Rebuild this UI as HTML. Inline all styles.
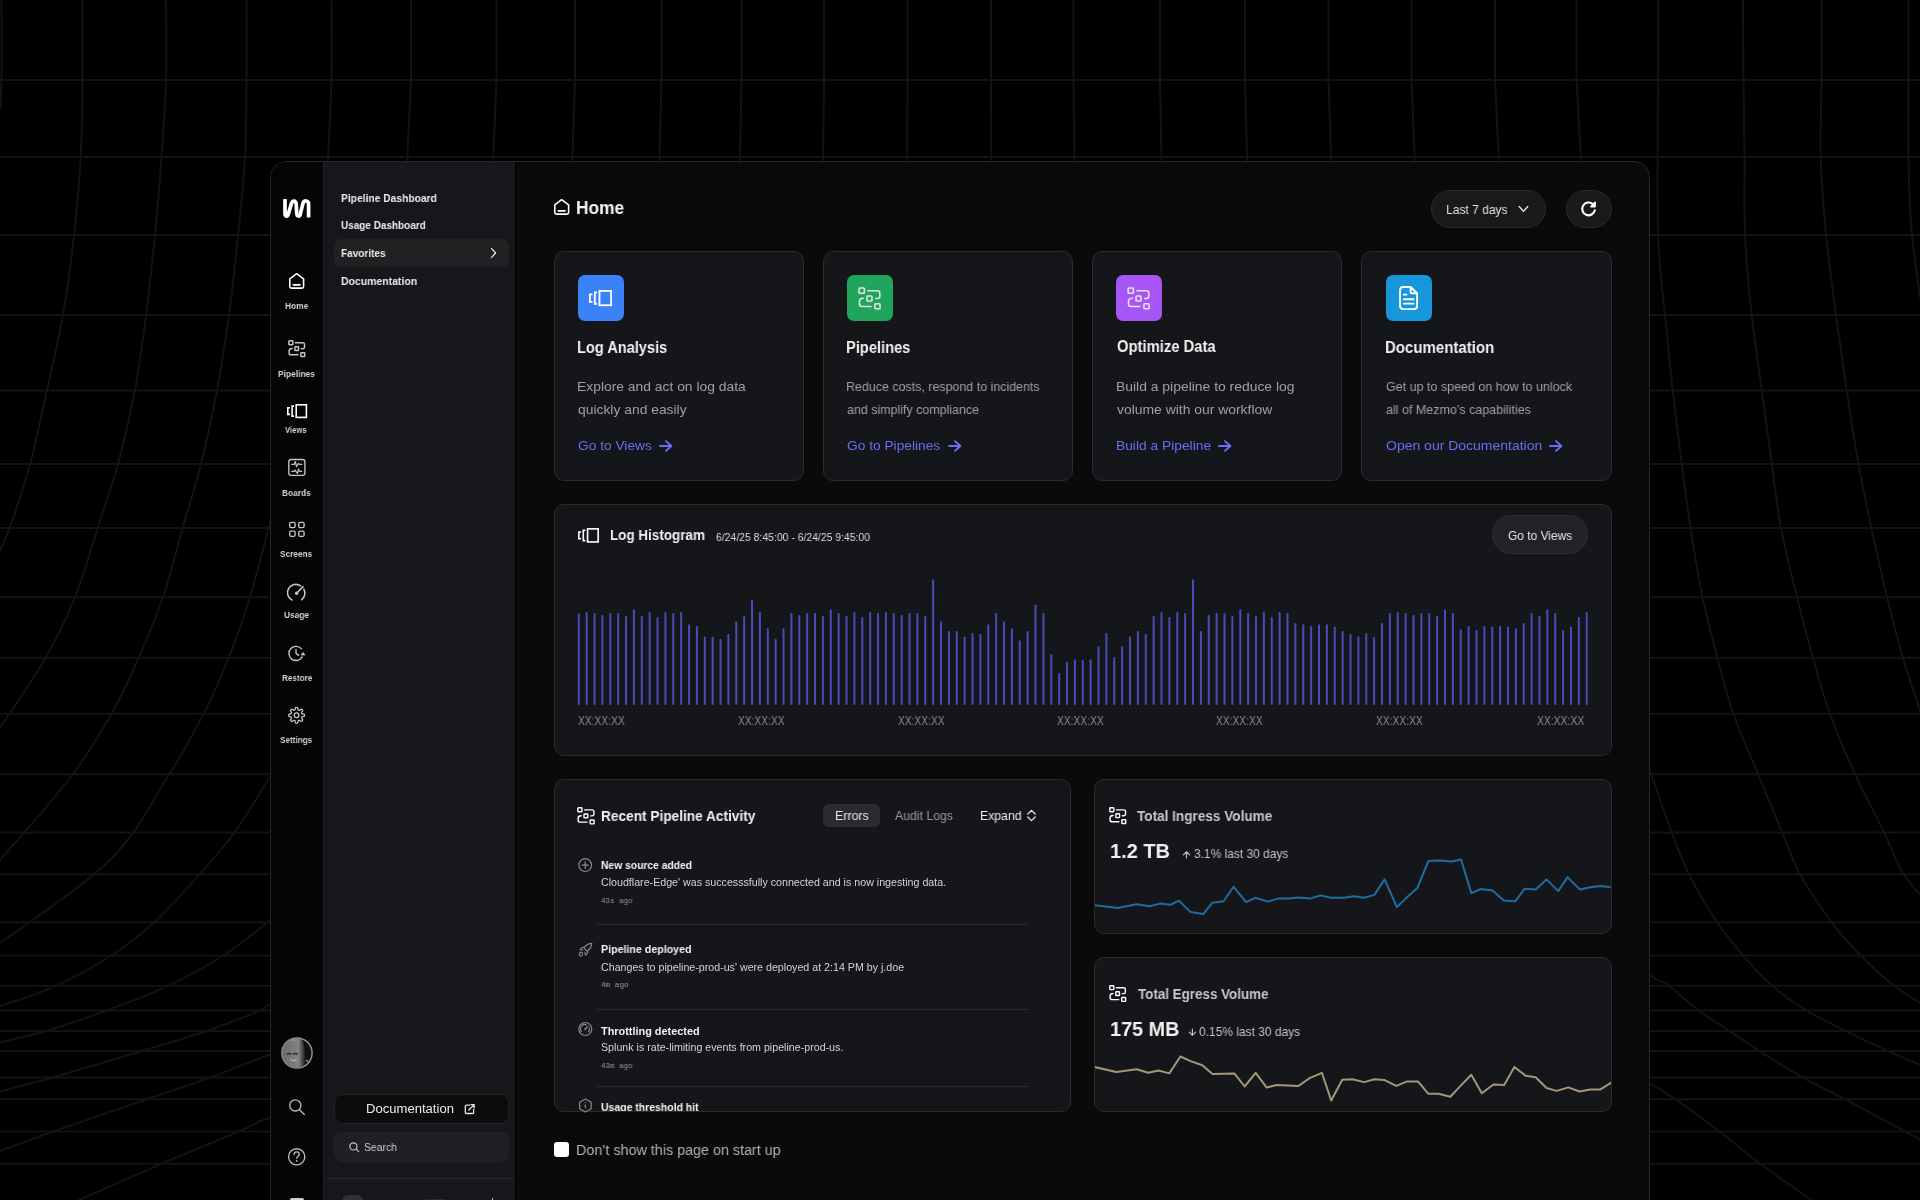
<!DOCTYPE html>
<html><head><meta charset="utf-8">
<style>
*{box-sizing:border-box;margin:0;padding:0}
html,body{width:1920px;height:1200px;overflow:hidden;background:#000;font-family:"Liberation Sans",sans-serif;color:#fff}
.abs{position:absolute}
#frame{position:absolute;left:270px;top:161px;width:1380px;height:1100px;border:1px solid #262626;border-radius:16px;overflow:hidden;background:#090a0a}
#rail{position:absolute;left:0;top:0;width:52px;height:100%;background:#050505}
#nav2{position:absolute;left:52px;top:0;width:192px;height:100%;background:#16171a;border-left:1px solid #1d1e20}
.t{position:absolute;white-space:nowrap;line-height:1}
.rl{position:absolute;left:271px;width:52px;text-align:center;font-size:10px;color:#d8d8d8;white-space:nowrap;line-height:1}
.ri{position:absolute}
.card{position:absolute;background:#15161a;border:1px solid #2a2b2e;border-radius:10px}
.ib{position:absolute;width:46px;height:46px;border-radius:7px}
.ib svg{position:absolute;left:0;top:0}
.ct{position:absolute;font-size:15.5px;font-weight:bold;color:#f2f2f2;white-space:nowrap;line-height:1}
.cd{position:absolute;font-size:13px;color:#a3a3a3;line-height:23px;white-space:nowrap}
.cl{position:absolute;font-size:14px;color:#6d6ff5;white-space:nowrap;line-height:1}
.nv{position:absolute;left:341px;font-size:11.5px;font-weight:bold;color:#ececec;white-space:nowrap;line-height:1}
.xl{position:absolute;top:714px;font-size:12px;color:#8c8c8c;white-space:nowrap;line-height:1}
.pill{position:absolute;border-radius:19px;background:#18191a;border:1px solid #2a2a2b}
.div{position:absolute;left:597px;width:431px;height:1px;background:#2a2b2e}
.at{position:absolute;left:601px;font-size:11px;font-weight:bold;color:#f0f0f0;white-space:nowrap;line-height:1}
.ad{position:absolute;left:601px;font-size:11.5px;color:#d6d6d6;white-space:nowrap;line-height:1}
.am{position:absolute;left:601px;font-family:"Liberation Mono",monospace;font-size:8px;color:#9a9a9a;white-space:nowrap;line-height:1}
.tx{position:absolute;white-space:pre;line-height:1;transform-origin:0 0;will-change:transform}

</style></head><body>
<svg class="abs" style="left:0;top:0" width="1920" height="1200" viewBox="0 0 1920 1200"><g stroke="#131313" stroke-width="2" fill="none"><path d="M0 80.0H1920"/><path d="M0 157.0H1920"/><path d="M0 235.0H1920"/><path d="M0 315.0H1920"/><path d="M0 390.5H1920"/><path d="M0 464.0H1920"/><path d="M0 528.0H1920"/><path d="M0 597.2H1920"/><path d="M0 657.8H1920"/><path d="M0 713.7H1920"/><path d="M0 774.2H1920"/><path d="M0 832.5H1920"/><path d="M0 874.3H1920"/><path d="M0 922.2H1920"/><path d="M0 955.5H1920"/><path d="M0 985.7H1920"/><path d="M0 1010.5H1920"/><path d="M0 1030.9H1920"/><path d="M0 1051.0H1920"/><path d="M0 1077.6H1920"/><path d="M0 1099.3H1920"/><path d="M0 1131.5H1920"/><path d="M0 1163.8H1920"/><path d="M1.5 0.0 C1.5 13.3 1.8 61.7 1.5 80.0 C1.2 98.3 0.2 105.0 0.0 110.0"/><path d="M82.5 0.0 C82.5 13.3 82.8 53.8 82.5 80.0 C82.2 106.2 82.1 131.2 80.7 157.0 C79.3 182.8 77.0 208.7 74.0 235.0 C71.0 261.3 67.5 289.2 63.0 315.0 C58.5 340.8 52.5 365.2 47.0 390.0 C41.5 414.8 36.2 441.2 30.0 464.0 C23.8 486.8 15.8 511.0 10.0 527.0 C4.2 543.0 -2.5 554.5 -5.0 560.0"/><path d="M166.0 0.0 C166.0 13.3 166.8 53.8 166.0 80.0 C165.2 106.2 163.3 131.2 161.5 157.0 C159.7 182.8 157.6 208.7 155.0 235.0 C152.4 261.3 149.3 289.2 146.0 315.0 C142.7 340.8 139.7 365.2 135.0 390.0 C130.3 414.8 124.2 441.2 118.0 464.0 C111.8 486.8 105.2 504.8 98.0 527.0 C90.8 549.2 83.7 575.3 75.0 597.0 C66.3 618.7 56.8 637.7 46.0 657.0 C35.2 676.3 19.3 699.2 10.0 713.0 C0.7 726.8 -6.7 735.5 -10.0 740.0"/><path d="M246.5 0.0 C246.5 13.3 246.8 53.8 246.5 80.0 C246.2 106.2 246.4 131.2 245.0 157.0 C243.6 182.8 240.7 208.7 238.0 235.0 C235.3 261.3 232.5 289.2 229.0 315.0 C225.5 340.8 221.7 365.2 217.0 390.0 C212.3 414.8 206.7 441.2 201.0 464.0 C195.3 486.8 189.3 504.8 183.0 527.0 C176.7 549.2 170.3 575.3 163.0 597.0 C155.7 618.7 147.5 637.7 139.0 657.0 C130.5 676.3 123.5 692.8 112.0 713.0 C100.5 733.2 88.7 753.5 70.0 778.0 C51.3 802.5 15.0 843.0 0.0 860.0 C-15.0 877.0 -16.7 876.7 -20.0 880.0"/><path d="M331.5 0.0 C331.5 13.3 332.1 53.8 331.5 80.0 C330.9 106.2 329.4 131.2 328.0 157.0 C326.6 182.8 325.3 208.7 323.0 235.0 C320.7 261.3 317.8 289.2 314.0 315.0 C310.2 340.8 304.8 365.2 300.0 390.0 C295.2 414.8 290.3 440.7 285.0 464.0 C279.7 487.3 273.8 507.8 268.0 530.0 C262.2 552.2 256.5 575.8 250.0 597.0 C243.5 618.2 236.7 637.7 229.0 657.0 C221.3 676.3 214.3 692.8 204.0 713.0 C193.7 733.2 182.7 753.5 167.0 778.0 C151.3 802.5 137.8 832.5 110.0 860.0 C82.2 887.5 21.7 927.2 0.0 943.0 C-21.7 958.8 -16.7 953.0 -20.0 955.0"/><path d="M411.0 0 L411.0 80 L406.7 170"/><path d="M496.5 0 L496.5 80 L492.8 170"/><path d="M575.0 0 L575.0 80 L572.0 170"/><path d="M661.5 0 L661.5 80 L659.2 170"/><path d="M741.5 0 L741.5 80 L739.8 170"/><path d="M380.0 500.0 C373.3 523.3 353.3 601.7 340.0 640.0 C326.7 678.3 312.0 706.7 300.0 730.0 C288.0 753.3 278.9 762.9 268.0 780.0 C257.1 797.1 245.9 816.8 234.5 832.5 C223.1 848.2 212.9 859.5 199.5 874.5 C186.1 889.5 168.6 909.1 154.0 922.5 C139.4 935.9 128.3 944.5 112.0 955.0 C95.7 965.5 74.7 977.3 56.0 985.8 C37.3 994.3 12.7 1001.5 0.0 1006.0 C-12.7 1010.5 -16.7 1011.8 -20.0 1013.0"/><path d="M420.0 700.0 C405.0 726.7 355.1 823.3 330.0 860.0 C304.9 896.7 287.2 904.2 269.5 920.0 C251.8 935.8 240.9 944.0 224.0 955.0 C207.1 966.0 187.8 976.5 168.0 985.8 C148.2 995.1 125.4 1003.5 105.0 1011.0 C84.6 1018.5 63.0 1025.8 45.5 1031.0 C28.0 1036.2 10.9 1039.7 0.0 1042.5 C-10.9 1045.3 -16.7 1047.1 -20.0 1048.0"/><path d="M430.0 860.0 C413.3 878.3 356.8 946.0 330.0 970.0 C303.2 994.0 281.3 997.2 269.5 1004.0 C257.7 1010.8 269.5 1006.5 259.0 1011.0 C248.5 1015.5 225.2 1024.6 206.5 1031.0 C187.8 1037.4 172.7 1041.8 147.0 1049.5 C121.3 1057.2 77.0 1070.5 52.5 1077.5 C28.0 1084.5 12.1 1088.2 0.0 1091.5 C-12.1 1094.8 -16.7 1096.1 -20.0 1097.0"/><path d="M450.0 960.0 C431.7 971.7 370.1 1014.2 340.0 1030.0 C309.9 1045.8 291.2 1046.9 269.5 1054.8 C247.8 1062.7 230.4 1070.1 210.0 1077.5 C189.6 1084.9 173.2 1090.2 147.0 1099.2 C120.8 1108.2 77.0 1123.2 52.5 1131.8 C28.0 1140.4 12.1 1146.6 0.0 1151.0 C-12.1 1155.4 -16.7 1156.8 -20.0 1158.0"/><path d="M480.0 1060.0 C456.7 1066.7 375.1 1090.4 340.0 1100.0 C304.9 1109.6 286.5 1112.5 269.5 1117.8 C252.5 1123.1 256.1 1124.1 238.0 1131.8 C219.9 1139.5 187.5 1152.6 161.0 1164.0 C134.5 1175.4 95.8 1192.7 79.0 1200.0 C62.2 1207.3 63.2 1206.7 60.0 1208.0"/><path d="M824.0 0 L824.0 80 L823.0 170"/><path d="M907.5 0 L907.5 80 L907.1 170"/><path d="M991.0 0 L991.0 80 L991.3 170"/><path d="M1073.5 0 L1073.5 80 L1074.5 170"/><path d="M1160.0 0 L1160.0 80 L1161.7 170"/><path d="M1245.0 0 L1245.0 80 L1247.3 170"/><path d="M1328.5 0 L1328.5 80 L1331.5 170"/><path d="M1411.5 0 L1411.5 80 L1415.2 170"/><path d="M1550.0 1030.0 C1560.0 1036.3 1593.3 1059.0 1610.0 1068.0 C1626.7 1077.0 1639.1 1078.6 1650.0 1083.8 C1660.9 1089.0 1663.9 1091.5 1675.5 1099.4 C1687.1 1107.3 1705.2 1120.7 1719.4 1131.4 C1733.6 1142.1 1745.2 1152.3 1760.5 1163.7 C1775.8 1175.1 1799.9 1192.0 1811.5 1200.0 C1823.1 1208.0 1826.9 1210.0 1830.0 1212.0"/><path d="M1495.0 0 L1495.0 80 L1499.3 170"/><path d="M1600.0 930.0 C1608.3 937.5 1638.6 965.5 1650.0 974.7 C1661.4 984.0 1660.4 979.6 1668.4 985.5 C1676.4 991.4 1687.8 1002.5 1698.0 1010.0 C1708.2 1017.5 1718.4 1023.5 1729.3 1030.8 C1740.2 1038.0 1751.0 1045.7 1763.3 1053.5 C1775.6 1061.3 1789.3 1069.9 1803.0 1077.6 C1816.7 1085.2 1828.5 1090.4 1845.5 1099.4 C1862.5 1108.4 1889.2 1123.0 1905.0 1131.4 C1920.8 1139.8 1934.2 1146.9 1940.0 1150.0"/><path d="M1576.5 0 L1576.5 80 L1581.5 170"/><path d="M1630.0 700.0 C1633.6 712.3 1644.6 752.0 1651.5 774.0 C1658.4 796.0 1665.3 815.3 1671.6 832.0 C1677.8 848.7 1681.5 859.0 1689.0 874.0 C1696.5 889.0 1707.5 908.2 1716.6 921.8 C1725.7 935.4 1734.3 945.2 1743.5 955.8 C1752.7 966.4 1761.4 976.5 1771.8 985.5 C1782.2 994.5 1793.5 1002.5 1805.8 1010.0 C1818.1 1017.5 1830.9 1023.5 1845.5 1030.8 C1860.1 1038.0 1877.8 1046.5 1893.6 1053.5 C1909.3 1060.5 1932.3 1069.8 1940.0 1073.0"/><path d="M1658.0 0.0 C1658.0 13.3 1658.0 41.0 1658.0 80.0 C1658.0 119.0 1656.8 194.8 1658.0 234.0 C1659.2 273.2 1662.5 289.0 1665.0 315.0 C1667.5 341.0 1669.9 365.3 1672.7 390.0 C1675.5 414.7 1678.7 440.0 1681.7 463.0 C1684.7 486.0 1687.0 505.7 1690.5 528.0 C1694.0 550.3 1698.0 575.3 1702.5 597.0 C1707.0 618.7 1712.3 638.5 1717.5 658.0 C1722.7 677.5 1726.7 694.7 1733.4 714.0 C1740.2 733.3 1749.9 754.3 1758.0 774.0 C1766.1 793.7 1775.0 815.3 1782.0 832.0 C1789.0 848.7 1791.8 859.0 1800.0 874.0 C1808.2 889.0 1821.1 908.2 1831.3 921.8 C1841.5 935.4 1850.6 945.2 1861.0 955.8 C1871.4 966.4 1880.4 975.6 1893.6 985.5 C1906.8 995.4 1932.3 1010.1 1940.0 1015.0"/><path d="M1743.0 0.0 C1743.1 13.3 1743.2 53.8 1743.5 80.0 C1743.8 106.2 1744.2 131.3 1744.5 157.0 C1744.8 182.7 1743.8 207.7 1745.0 234.0 C1746.2 260.3 1748.9 289.0 1751.7 315.0 C1754.5 341.0 1758.4 365.3 1761.7 390.0 C1765.0 414.7 1768.5 440.0 1771.7 463.0 C1774.9 486.0 1776.8 505.7 1781.0 528.0 C1785.2 550.3 1791.7 575.3 1797.0 597.0 C1802.3 618.7 1807.5 638.5 1813.0 658.0 C1818.5 677.5 1823.0 694.7 1830.0 714.0 C1837.0 733.3 1846.0 754.3 1855.0 774.0 C1864.0 793.7 1875.9 815.3 1884.0 832.0 C1892.1 848.7 1895.8 861.8 1903.5 874.0 C1911.2 886.2 1925.6 899.8 1930.0 905.0"/><path d="M1821.5 0.0 C1821.5 13.3 1821.6 53.8 1821.5 80.0 C1821.4 106.2 1820.0 131.3 1820.7 157.0 C1821.5 182.7 1823.5 207.7 1826.0 234.0 C1828.5 260.3 1832.5 289.0 1836.0 315.0 C1839.5 341.0 1843.0 365.3 1846.7 390.0 C1850.4 414.7 1854.2 440.0 1858.3 463.0 C1862.4 486.0 1866.6 505.7 1871.4 528.0 C1876.2 550.3 1881.7 575.3 1887.0 597.0 C1892.3 618.7 1896.7 636.7 1903.0 658.0 C1909.3 679.3 1921.3 713.8 1925.0 725.0"/><path d="M1908.5 0.0 C1908.5 13.3 1908.5 53.8 1908.5 80.0 C1908.5 106.2 1907.9 131.3 1908.5 157.0 C1909.1 182.7 1909.2 205.2 1912.0 234.0 C1914.8 262.8 1922.8 314.0 1925.0 330.0"/></g></svg>
<div id="frame"><div id="rail"></div><div id="nav2"></div></div>

<!-- logo -->

<!-- secondary nav -->
<div class="abs" style="left:334px;top:239px;width:175px;height:28px;border-radius:7px;background:#212124"></div>

<!-- rail -->

<!-- main header -->

<div class="pill" style="left:1431px;top:190px;width:115px;height:38px"></div>
<div class="pill" style="left:1566px;top:190px;width:46px;height:38px"></div>

<!-- cards -->
<div class="card" style="left:554px;top:251px;width:250px;height:230px"></div>
<div class="card" style="left:823px;top:251px;width:250px;height:230px"></div>
<div class="card" style="left:1092px;top:251px;width:250px;height:230px"></div>
<div class="card" style="left:1361px;top:251px;width:251px;height:230px"></div>

<div class="ib" style="left:578px;top:275px;background:#3b82f6"></div>
<div class="ib" style="left:847px;top:275px;background:#20a65c"></div>
<div class="ib" style="left:1116px;top:275px;background:#a855f7"></div>
<div class="ib" style="left:1386px;top:275px;background:#1896dc"></div>




<!-- histogram -->
<div class="card" style="left:554px;top:504px;width:1058px;height:252px"></div>
<div class="abs" style="left:1492px;top:515px;width:96px;height:39px;border-radius:20px;background:#222326;border:1px solid #2e2f33"></div>
<svg class="abs" style="left:0;top:0" width="1920" height="1200" viewBox="0 0 1920 1200"><g fill="#4a4bb9"><rect x="577.80" y="613.2" width="2" height="91.8" rx="1"/><rect x="585.67" y="612.1" width="2" height="92.9" rx="1"/><rect x="593.55" y="613.1" width="2" height="91.9" rx="1"/><rect x="601.42" y="615.0" width="2" height="90.0" rx="1"/><rect x="609.30" y="613.1" width="2" height="91.9" rx="1"/><rect x="617.17" y="613.1" width="2" height="91.9" rx="1"/><rect x="625.05" y="615.9" width="2" height="89.1" rx="1"/><rect x="632.92" y="609.3" width="2" height="95.7" rx="1"/><rect x="640.80" y="615.9" width="2" height="89.1" rx="1"/><rect x="648.67" y="612.1" width="2" height="92.9" rx="1"/><rect x="656.54" y="617.0" width="2" height="88.0" rx="1"/><rect x="664.42" y="612.1" width="2" height="92.9" rx="1"/><rect x="672.29" y="613.1" width="2" height="91.9" rx="1"/><rect x="680.17" y="612.1" width="2" height="92.9" rx="1"/><rect x="688.04" y="624.2" width="2" height="80.8" rx="1"/><rect x="695.92" y="625.9" width="2" height="79.1" rx="1"/><rect x="703.79" y="636.6" width="2" height="68.4" rx="1"/><rect x="711.67" y="636.6" width="2" height="68.4" rx="1"/><rect x="719.54" y="638.8" width="2" height="66.2" rx="1"/><rect x="727.42" y="633.8" width="2" height="71.2" rx="1"/><rect x="735.29" y="621.2" width="2" height="83.8" rx="1"/><rect x="743.16" y="615.9" width="2" height="89.1" rx="1"/><rect x="751.04" y="599.4" width="2" height="105.6" rx="1"/><rect x="758.91" y="612.1" width="2" height="92.9" rx="1"/><rect x="766.79" y="628.2" width="2" height="76.8" rx="1"/><rect x="774.66" y="638.8" width="2" height="66.2" rx="1"/><rect x="782.54" y="628.2" width="2" height="76.8" rx="1"/><rect x="790.41" y="613.1" width="2" height="91.9" rx="1"/><rect x="798.29" y="615.0" width="2" height="90.0" rx="1"/><rect x="806.16" y="613.1" width="2" height="91.9" rx="1"/><rect x="814.03" y="613.1" width="2" height="91.9" rx="1"/><rect x="821.91" y="615.9" width="2" height="89.1" rx="1"/><rect x="829.78" y="609.3" width="2" height="95.7" rx="1"/><rect x="837.66" y="613.1" width="2" height="91.9" rx="1"/><rect x="845.53" y="615.9" width="2" height="89.1" rx="1"/><rect x="853.41" y="612.1" width="2" height="92.9" rx="1"/><rect x="861.28" y="617.0" width="2" height="88.0" rx="1"/><rect x="869.16" y="612.1" width="2" height="92.9" rx="1"/><rect x="877.03" y="613.1" width="2" height="91.9" rx="1"/><rect x="884.91" y="612.1" width="2" height="92.9" rx="1"/><rect x="892.78" y="613.1" width="2" height="91.9" rx="1"/><rect x="900.65" y="615.0" width="2" height="90.0" rx="1"/><rect x="908.53" y="613.1" width="2" height="91.9" rx="1"/><rect x="916.40" y="613.1" width="2" height="91.9" rx="1"/><rect x="924.28" y="615.9" width="2" height="89.1" rx="1"/><rect x="932.15" y="579.2" width="2" height="125.8" rx="1"/><rect x="940.03" y="621.2" width="2" height="83.8" rx="1"/><rect x="947.90" y="631.1" width="2" height="73.9" rx="1"/><rect x="955.78" y="631.1" width="2" height="73.9" rx="1"/><rect x="963.65" y="636.6" width="2" height="68.4" rx="1"/><rect x="971.52" y="633.1" width="2" height="71.9" rx="1"/><rect x="979.40" y="633.8" width="2" height="71.2" rx="1"/><rect x="987.27" y="624.2" width="2" height="80.8" rx="1"/><rect x="995.15" y="613.1" width="2" height="91.9" rx="1"/><rect x="1003.02" y="621.2" width="2" height="83.8" rx="1"/><rect x="1010.90" y="628.2" width="2" height="76.8" rx="1"/><rect x="1018.77" y="640.2" width="2" height="64.8" rx="1"/><rect x="1026.65" y="631.1" width="2" height="73.9" rx="1"/><rect x="1034.52" y="604.4" width="2" height="100.6" rx="1"/><rect x="1042.40" y="613.1" width="2" height="91.9" rx="1"/><rect x="1050.27" y="654.1" width="2" height="50.9" rx="1"/><rect x="1058.14" y="673.1" width="2" height="31.9" rx="1"/><rect x="1066.02" y="661.8" width="2" height="43.2" rx="1"/><rect x="1073.89" y="659.3" width="2" height="45.7" rx="1"/><rect x="1081.77" y="660.1" width="2" height="44.9" rx="1"/><rect x="1089.64" y="659.3" width="2" height="45.7" rx="1"/><rect x="1097.52" y="646.3" width="2" height="58.7" rx="1"/><rect x="1105.39" y="633.1" width="2" height="71.9" rx="1"/><rect x="1113.27" y="657.1" width="2" height="47.9" rx="1"/><rect x="1121.14" y="646.3" width="2" height="58.7" rx="1"/><rect x="1129.01" y="636.2" width="2" height="68.8" rx="1"/><rect x="1136.89" y="631.1" width="2" height="73.9" rx="1"/><rect x="1144.76" y="634.1" width="2" height="70.9" rx="1"/><rect x="1152.64" y="615.9" width="2" height="89.1" rx="1"/><rect x="1160.51" y="612.1" width="2" height="92.9" rx="1"/><rect x="1168.39" y="617.0" width="2" height="88.0" rx="1"/><rect x="1176.26" y="612.1" width="2" height="92.9" rx="1"/><rect x="1184.14" y="613.1" width="2" height="91.9" rx="1"/><rect x="1192.01" y="579.2" width="2" height="125.8" rx="1"/><rect x="1199.89" y="631.1" width="2" height="73.9" rx="1"/><rect x="1207.76" y="615.0" width="2" height="90.0" rx="1"/><rect x="1215.63" y="613.1" width="2" height="91.9" rx="1"/><rect x="1223.51" y="613.1" width="2" height="91.9" rx="1"/><rect x="1231.38" y="615.9" width="2" height="89.1" rx="1"/><rect x="1239.26" y="609.3" width="2" height="95.7" rx="1"/><rect x="1247.13" y="613.1" width="2" height="91.9" rx="1"/><rect x="1255.01" y="615.9" width="2" height="89.1" rx="1"/><rect x="1262.88" y="612.1" width="2" height="92.9" rx="1"/><rect x="1270.76" y="617.0" width="2" height="88.0" rx="1"/><rect x="1278.63" y="612.1" width="2" height="92.9" rx="1"/><rect x="1286.51" y="613.1" width="2" height="91.9" rx="1"/><rect x="1294.38" y="623.1" width="2" height="81.9" rx="1"/><rect x="1302.25" y="624.2" width="2" height="80.8" rx="1"/><rect x="1310.13" y="625.9" width="2" height="79.1" rx="1"/><rect x="1318.00" y="624.2" width="2" height="80.8" rx="1"/><rect x="1325.88" y="624.2" width="2" height="80.8" rx="1"/><rect x="1333.75" y="626.6" width="2" height="78.4" rx="1"/><rect x="1341.63" y="631.1" width="2" height="73.9" rx="1"/><rect x="1349.50" y="634.1" width="2" height="70.9" rx="1"/><rect x="1357.38" y="636.2" width="2" height="68.8" rx="1"/><rect x="1365.25" y="633.1" width="2" height="71.9" rx="1"/><rect x="1373.12" y="637.0" width="2" height="68.0" rx="1"/><rect x="1381.00" y="623.1" width="2" height="81.9" rx="1"/><rect x="1388.87" y="613.1" width="2" height="91.9" rx="1"/><rect x="1396.75" y="612.1" width="2" height="92.9" rx="1"/><rect x="1404.62" y="613.1" width="2" height="91.9" rx="1"/><rect x="1412.50" y="615.0" width="2" height="90.0" rx="1"/><rect x="1420.37" y="613.1" width="2" height="91.9" rx="1"/><rect x="1428.25" y="613.1" width="2" height="91.9" rx="1"/><rect x="1436.12" y="615.9" width="2" height="89.1" rx="1"/><rect x="1443.99" y="609.3" width="2" height="95.7" rx="1"/><rect x="1451.87" y="613.1" width="2" height="91.9" rx="1"/><rect x="1459.74" y="629.2" width="2" height="75.8" rx="1"/><rect x="1467.62" y="625.9" width="2" height="79.1" rx="1"/><rect x="1475.49" y="630.0" width="2" height="75.0" rx="1"/><rect x="1483.37" y="625.9" width="2" height="79.1" rx="1"/><rect x="1491.24" y="626.6" width="2" height="78.4" rx="1"/><rect x="1499.12" y="625.9" width="2" height="79.1" rx="1"/><rect x="1506.99" y="626.6" width="2" height="78.4" rx="1"/><rect x="1514.87" y="628.2" width="2" height="76.8" rx="1"/><rect x="1522.74" y="623.1" width="2" height="81.9" rx="1"/><rect x="1530.61" y="613.1" width="2" height="91.9" rx="1"/><rect x="1538.49" y="615.9" width="2" height="89.1" rx="1"/><rect x="1546.36" y="609.3" width="2" height="95.7" rx="1"/><rect x="1554.24" y="613.1" width="2" height="91.9" rx="1"/><rect x="1562.11" y="630.0" width="2" height="75.0" rx="1"/><rect x="1569.99" y="626.6" width="2" height="78.4" rx="1"/><rect x="1577.86" y="617.0" width="2" height="88.0" rx="1"/><rect x="1585.74" y="612.1" width="2" height="92.9" rx="1"/></g></svg>

<!-- recent activity -->
<div class="card" style="left:554px;top:779px;width:517px;height:333px;overflow:hidden"></div>
<div class="abs" style="left:823px;top:804px;width:57px;height:23px;border-radius:6px;background:#2a2b2e"></div>

<div class="div" style="top:924px"></div>
<div class="div" style="top:1009px"></div>
<div class="div" style="top:1086px"></div>

<!-- ingress / egress -->
<div class="card" style="left:1094px;top:779px;width:518px;height:155px"></div>
<div class="card" style="left:1094px;top:957px;width:518px;height:155px"></div>
<svg class="abs" style="left:0;top:0" width="1920" height="1200" viewBox="0 0 1920 1200"><defs><clipPath id="c1"><rect x="1095" y="780" width="516" height="153" rx="10"/></clipPath><clipPath id="c2"><rect x="1095" y="958" width="516" height="153" rx="10"/></clipPath></defs><polyline clip-path="url(#c1)" fill="none" stroke="#1f6c9e" stroke-width="2" stroke-linejoin="round" points="1094.4,905.1 1117.7,908.0 1136.7,904.2 1149.8,906.2 1160.0,903.6 1170.2,904.8 1179.0,900.7 1190.6,912.1 1203.2,914.1 1212.5,902.7 1223.6,901.3 1233.5,886.7 1246.1,902.1 1255.4,897.8 1267.9,901.6 1278.2,898.6 1288.4,898.4 1298.6,897.5 1310.2,898.6 1320.5,895.4 1330.7,897.8 1343.8,897.8 1354.0,896.3 1364.2,897.8 1374.4,894.9 1384.6,879.4 1396.9,907.1 1406.5,897.8 1417.3,888.1 1428.4,861.0 1440.1,860.4 1451.1,861.6 1461.1,859.6 1471.3,893.1 1480.9,889.0 1492.6,890.5 1503.7,900.4 1515.3,901.3 1524.7,888.7 1535.7,889.6 1546.5,879.4 1558.2,891.1 1567.5,877.1 1580.1,889.6 1590.3,887.3 1600.5,886.1 1610.7,887.3"/><polyline clip-path="url(#c2)" fill="none" stroke="#a39679" stroke-width="2" stroke-linejoin="round" points="1094.4,1067.0 1116.3,1071.9 1136.7,1069.3 1148.3,1072.8 1158.6,1070.5 1169.3,1073.4 1180.4,1056.5 1190.6,1061.1 1202.3,1065.2 1212.5,1074.0 1234.4,1073.4 1244.6,1086.5 1255.7,1072.8 1266.5,1087.4 1276.7,1085.1 1298.6,1085.9 1310.2,1077.8 1321.9,1072.8 1331.2,1100.5 1342.3,1079.8 1352.5,1079.2 1364.2,1082.1 1374.4,1079.2 1384.6,1080.1 1396.3,1085.9 1406.5,1081.6 1418.2,1081.6 1428.4,1093.8 1438.6,1093.8 1450.3,1096.7 1460.5,1085.9 1471.3,1074.8 1481.8,1093.2 1493.4,1084.5 1504.2,1085.1 1514.4,1067.0 1525.5,1075.7 1535.7,1077.2 1546.5,1088.0 1556.7,1090.9 1568.4,1087.4 1579.5,1091.5 1590.3,1089.4 1600.5,1089.4 1611.3,1082.7"/></svg>

<!-- bottom checkbox -->
<div class="abs" style="left:554px;top:1142px;width:15px;height:15px;border-radius:3px;background:#fff"></div>

<!-- sidebar bottom -->
<div class="abs" id="nav2shadow" style="left:515px;top:162px;width:2px;height:1038px;background:#040404"></div>
<div class="abs" style="left:341.5px;top:1194.7px;width:21.5px;height:12px;border-radius:6px;background:#303133"></div>
<div class="abs" style="left:423.5px;top:1198.5px;width:23.5px;height:8px;border-radius:3px;background:#2a2a2c"></div>
<div class="abs" style="left:290px;top:1198.3px;width:14px;height:6px;border-radius:2px;background:#cfcfcf"></div>
<div class="abs" style="left:491.5px;top:1197.5px;width:1.3px;height:4px;background:#bbb"></div>
<div class="abs" style="left:334px;top:1094px;width:175px;height:30px;border-radius:8px;background:#0c0c0d;border:1px solid #222"></div>
<div class="abs" style="left:334px;top:1132px;width:175px;height:30px;border-radius:8px;background:#1f2023"></div>
<div class="abs" style="left:327px;top:1178px;width:188px;height:1px;background:#26272a"></div>
<svg class="abs" style="left:283.00px;top:199.00px;overflow:visible" width="28" height="19" viewBox="0 0 28 19"><path d="M2 0 V14.8 C2 17.6 4.6 17.9 5.2 15.4 L8.4 4.6 C9.4 1.2 12.6 1.4 13.2 4.8 L13.7 14.2 C14.1 17.8 16.8 18 17.4 14.6 L19.9 4.6 C20.9 1.0 25.6 1.0 25.6 5.2 V18.6" fill="none" stroke="#fff" stroke-width="3.7" stroke-linejoin="round"/></svg>
<svg class="abs" style="left:289.20px;top:273.00px;overflow:visible" width="16" height="16" viewBox="0 0 16 16"><path d="M0.8 5.9 L7.6 0.7 L14.6 5.9 V13.4 Q14.6 15.1 12.9 15.1 H2.5 Q0.8 15.1 0.8 13.4 Z" fill="none" stroke="#ffffff" stroke-width="1.55" stroke-linejoin="round"/><path d="M4.3 11.9 H11.0" stroke="#ffffff" stroke-width="1.6" stroke-linecap="round"/></svg>
<svg class="abs" style="left:288.05px;top:340.10px;overflow:visible" width="17.64" height="17.64" viewBox="0 0 17.64 17.64"><g transform="scale(0.98)" fill="none" stroke="#c6c6c6" stroke-width="1.47959" stroke-linecap="round" stroke-linejoin="round"><rect x="0.85" y="0.8" width="4.1" height="4.0" rx="0.6"/><rect x="7.0" y="6.95" width="3.8" height="3.85" rx="0.6"/><rect x="13.1" y="12.95" width="4.0" height="3.95" rx="0.6"/><path d="M7.6 2.9 H15.1 Q16.9 2.9 16.9 4.7 V7.2 Q16.9 8.9 15.1 8.9 H13.7"/><path d="M4.15 8.75 Q1.15 8.75 1.15 11.2 V13.2 Q1.15 15.1 3.2 15.1 H10.1"/></g></svg>
<svg class="abs" style="left:286.80px;top:403.80px;overflow:visible" width="20.2" height="14.2" viewBox="0 0 20.2 14.2"><g transform="scale(1)" fill="none" stroke="#ffffff" stroke-width="1.6" stroke-linejoin="miter"><rect x="9.2" y="0.8" width="10.2" height="12.6"/><path d="M7.1 2.1 H5.1 V12.1 H7.1"/><path d="M3.0 3.8 H0.8 V10.4 H3.0"/></g></svg>
<svg class="abs" style="left:286.00px;top:457.00px;overflow:visible" width="22" height="22" viewBox="0 0 22 22"><rect x="2.8" y="2.5" width="16.1" height="15.8" rx="2.2" fill="none" stroke="#c6c6c6" stroke-width="1.35"/><path d="M5.8 7.4 H8.2 L9.4 4.5 L10.4 9.6 L12.5 6.4 L13.6 7.4 H15.8" fill="none" stroke="#c6c6c6" stroke-width="1.2" stroke-linejoin="round" stroke-linecap="round"/><path d="M5.8 14.4 H8.2 L9.0 13.1 L11.5 16.4 L12.5 11.9 L13.4 14.4 H15.8" fill="none" stroke="#c6c6c6" stroke-width="1.2" stroke-linejoin="round" stroke-linecap="round"/></svg>
<svg class="abs" style="left:0;top:0" width="1920" height="1200"><rect x="289.7" y="522.3" width="5.4" height="5.3" rx="1.4" fill="none" stroke="#c6c6c6" stroke-width="1.35"/><rect x="298.7" y="522.3" width="5.4" height="5.3" rx="1.4" fill="none" stroke="#c6c6c6" stroke-width="1.35"/><rect x="289.7" y="531.1" width="5.4" height="5.3" rx="1.4" fill="none" stroke="#c6c6c6" stroke-width="1.35"/><rect x="298.7" y="531.1" width="5.4" height="5.3" rx="1.4" fill="none" stroke="#c6c6c6" stroke-width="1.35"/></svg>
<svg class="abs" style="left:0;top:0" width="1920" height="1200"><path d="M291.84 600.00 A8.3 8.3 0 1 1 300.50 585.87" fill="none" stroke="#c6c6c6" stroke-width="1.6" stroke-linecap="round"/><path d="M303.93 589.30 A8.3 8.3 0 0 1 301.71 599.74" fill="none" stroke="#c6c6c6" stroke-width="1.6" stroke-linecap="round"/><path d="M296.6 593.2 L303.0 586.6" stroke="#c6c6c6" stroke-width="1.6" stroke-linecap="round"/><circle cx="296.6" cy="593.2" r="1.7" fill="#c6c6c6"/></svg>
<svg class="abs" style="left:0;top:0" width="1920" height="1200"><path d="M301.44 648.84 A7.1 7.1 0 1 0 302.15 656.95" fill="none" stroke="#c6c6c6" stroke-width="1.35" stroke-linecap="round"/><path d="M301.3 654.9 L303.1 652.6 L304.9 654.9 Z" fill="#c6c6c6" stroke="#c6c6c6" stroke-width="1" stroke-linejoin="round"/><path d="M296 649.3 V653.4 L298.7 655.4" fill="none" stroke="#c6c6c6" stroke-width="1.35" stroke-linecap="round" stroke-linejoin="round"/></svg>
<svg class="abs" style="left:0;top:0" width="1920" height="1200"><polyline points="296.60,707.40 296.81,707.41 297.01,707.42 297.22,707.46 297.42,707.53 297.60,707.67 297.76,707.94 297.88,708.40 297.95,708.96 298.01,709.41 298.10,709.69 298.22,709.84 298.34,709.94 298.47,710.01 298.61,710.07 298.74,710.13 298.88,710.18 299.02,710.23 299.16,710.28 299.31,710.30 299.50,710.27 299.76,710.14 300.13,709.86 300.57,709.52 300.98,709.28 301.28,709.20 301.52,709.23 301.71,709.32 301.88,709.44 302.04,709.57 302.19,709.71 302.33,709.86 302.46,710.02 302.58,710.19 302.67,710.38 302.70,710.62 302.62,710.92 302.38,711.33 302.04,711.77 301.76,712.14 301.63,712.40 301.60,712.59 301.62,712.74 301.67,712.88 301.72,713.02 301.77,713.16 301.83,713.29 301.89,713.43 301.96,713.56 302.06,713.68 302.21,713.80 302.49,713.89 302.94,713.95 303.50,714.02 303.96,714.14 304.23,714.30 304.37,714.48 304.44,714.68 304.48,714.89 304.49,715.09 304.50,715.30 304.49,715.51 304.48,715.71 304.44,715.92 304.37,716.12 304.23,716.30 303.96,716.46 303.50,716.58 302.94,716.65 302.49,716.71 302.21,716.80 302.06,716.92 301.96,717.04 301.89,717.17 301.83,717.31 301.77,717.44 301.72,717.58 301.67,717.72 301.62,717.86 301.60,718.01 301.63,718.20 301.76,718.46 302.04,718.83 302.38,719.27 302.62,719.68 302.70,719.98 302.67,720.22 302.58,720.41 302.46,720.58 302.33,720.74 302.19,720.89 302.04,721.03 301.88,721.16 301.71,721.28 301.52,721.37 301.28,721.40 300.98,721.32 300.57,721.08 300.13,720.74 299.76,720.46 299.50,720.33 299.31,720.30 299.16,720.32 299.02,720.37 298.88,720.42 298.74,720.47 298.61,720.53 298.47,720.59 298.34,720.66 298.22,720.76 298.10,720.91 298.01,721.19 297.95,721.64 297.88,722.20 297.76,722.66 297.60,722.93 297.42,723.07 297.22,723.14 297.01,723.18 296.81,723.19 296.60,723.20 296.39,723.19 296.19,723.18 295.98,723.14 295.78,723.07 295.60,722.93 295.44,722.66 295.32,722.20 295.25,721.64 295.19,721.19 295.10,720.91 294.98,720.76 294.86,720.66 294.73,720.59 294.59,720.53 294.46,720.47 294.32,720.42 294.18,720.37 294.04,720.32 293.89,720.30 293.70,720.33 293.44,720.46 293.07,720.74 292.63,721.08 292.22,721.32 291.92,721.40 291.68,721.37 291.49,721.28 291.32,721.16 291.16,721.03 291.01,720.89 290.87,720.74 290.74,720.58 290.62,720.41 290.53,720.22 290.50,719.98 290.58,719.68 290.82,719.27 291.16,718.83 291.44,718.46 291.57,718.20 291.60,718.01 291.58,717.86 291.53,717.72 291.48,717.58 291.43,717.44 291.37,717.31 291.31,717.17 291.24,717.04 291.14,716.92 290.99,716.80 290.71,716.71 290.26,716.65 289.70,716.58 289.24,716.46 288.97,716.30 288.83,716.12 288.76,715.92 288.72,715.71 288.71,715.51 288.70,715.30 288.71,715.09 288.72,714.89 288.76,714.68 288.83,714.48 288.97,714.30 289.24,714.14 289.70,714.02 290.26,713.95 290.71,713.89 290.99,713.80 291.14,713.68 291.24,713.56 291.31,713.43 291.37,713.29 291.43,713.16 291.48,713.02 291.53,712.88 291.58,712.74 291.60,712.59 291.57,712.40 291.44,712.14 291.16,711.77 290.82,711.33 290.58,710.92 290.50,710.62 290.53,710.38 290.62,710.19 290.74,710.02 290.87,709.86 291.01,709.71 291.16,709.57 291.32,709.44 291.49,709.32 291.68,709.23 291.92,709.20 292.22,709.28 292.63,709.52 293.07,709.86 293.44,710.14 293.70,710.27 293.89,710.30 294.04,710.28 294.18,710.23 294.32,710.18 294.46,710.13 294.59,710.07 294.73,710.01 294.86,709.94 294.98,709.84 295.10,709.69 295.19,709.41 295.25,708.96 295.32,708.40 295.44,707.94 295.60,707.67 295.78,707.53 295.98,707.46 296.19,707.42 296.39,707.41 296.60,707.40" fill="none" stroke="#c6c6c6" stroke-width="1.3" stroke-linejoin="round"/><circle cx="296.6" cy="715.3" r="2.4" fill="none" stroke="#c6c6c6" stroke-width="1.3"/></svg>
<svg class="abs" style="left:0;top:0" width="1920" height="1200"><circle cx="295.3" cy="1105.4" r="5.6" fill="none" stroke="#bdbdbd" stroke-width="1.35"/><path d="M299.5 1109.7 L304.4 1114.4" stroke="#bdbdbd" stroke-width="1.35" stroke-linecap="round"/><circle cx="296.7" cy="1156.8" r="8.1" fill="none" stroke="#bdbdbd" stroke-width="1.35"/><path d="M294.1 1154.6 Q294.1 1151.9 296.7 1151.9 Q299.3 1151.9 299.3 1154.3 Q299.3 1155.9 297.6 1156.5 Q296.7 1156.9 296.7 1158.3" fill="none" stroke="#bdbdbd" stroke-width="1.35" stroke-linecap="round"/><circle cx="296.7" cy="1160.9" r="0.9" fill="#bdbdbd"/></svg>
<svg class="abs" style="left:281px;top:1037px" width="32" height="32" viewBox="0 0 32 32"><defs><clipPath id="av"><circle cx="16" cy="16" r="14.6"/></clipPath><linearGradient id="avg" x1="0" y1="0" x2="1" y2="0"><stop offset="0" stop-color="#6d6b69"/><stop offset="0.55" stop-color="#858381"/><stop offset="0.7" stop-color="#3a3938"/><stop offset="1" stop-color="#141313"/></linearGradient></defs><g clip-path="url(#av)"><rect x="0" y="0" width="32" height="32" fill="url(#avg)"/><path d="M21 3 C25 8 23 20 24 32 L32 32 L32 0 Z" fill="#121111"/><path d="M5.5 17.2 Q8 15.8 10.5 17.2 M12 17.2 Q14.5 15.8 17 17.2" stroke="#2b2b2b" stroke-width="1.3" fill="none"/><path d="M9.5 22.5 Q12.5 24.5 15.5 22.5" stroke="#c4c2c0" stroke-width="1.1" fill="none"/><path d="M3 4 C6 2 12 2 15 4" stroke="#8c8a88" stroke-width="3" fill="none"/><path d="M25 23 L28 25.5" stroke="#8a8886" stroke-width="1.6"/></g><circle cx="16" cy="16" r="15.1" fill="none" stroke="#8f8f8f" stroke-width="1.5"/></svg>
<svg class="abs" style="left:553.75px;top:199.00px;overflow:visible" width="16" height="16" viewBox="0 0 16 16"><path d="M0.8 5.9 L7.6 0.7 L14.6 5.9 V13.4 Q14.6 15.1 12.9 15.1 H2.5 Q0.8 15.1 0.8 13.4 Z" fill="none" stroke="#ffffff" stroke-width="1.55" stroke-linejoin="round"/><path d="M4.3 11.9 H11.0" stroke="#ffffff" stroke-width="1.6" stroke-linecap="round"/></svg>
<svg class="abs" style="left:0;top:0" width="1920" height="1200"><path d="M1519.2 206.6 L1523.5 211.2 L1527.8 206.6" fill="none" stroke="#e0e0e0" stroke-width="1.4" stroke-linecap="round" stroke-linejoin="round"/></svg>
<svg class="abs" style="left:0;top:0" width="1920" height="1200"><path d="M1592.88 204.14 A6.4 6.4 0 1 0 1594.86 210.23" fill="none" stroke="#fff" stroke-width="2.1" stroke-linecap="round"/><path d="M1591.0 206.6 L1595.1 206.6 L1595.1 202.3 Z" fill="#fff" stroke="#fff" stroke-width="1.6" stroke-linejoin="round"/></svg>
<svg class="abs" style="left:0;top:0" width="1920" height="1200"><path d="M491.6 248.6 L495.6 253 L491.6 257.4" fill="none" stroke="#e6e6e6" stroke-width="1.3" stroke-linecap="round" stroke-linejoin="round"/></svg>
<svg class="abs" style="left:589.00px;top:290.00px;overflow:visible" width="23.028" height="16.188" viewBox="0 0 23.028 16.188"><g transform="scale(1.14)" fill="none" stroke="#ffffff" stroke-width="1.62281" stroke-linejoin="miter"><rect x="9.2" y="0.8" width="10.2" height="12.6"/><path d="M7.1 2.1 H5.1 V12.1 H7.1"/><path d="M3.0 3.8 H0.8 V10.4 H3.0"/></g></svg>
<svg class="abs" style="left:858.20px;top:286.50px;overflow:visible" width="23.22" height="23.22" viewBox="0 0 23.22 23.22"><g transform="scale(1.29)" fill="none" stroke="#e4e4e4" stroke-width="1.24031" stroke-linecap="round" stroke-linejoin="round"><rect x="0.85" y="0.8" width="4.1" height="4.0" rx="0.6"/><rect x="7.0" y="6.95" width="3.8" height="3.85" rx="0.6"/><rect x="13.1" y="12.95" width="4.0" height="3.95" rx="0.6"/><path d="M7.6 2.9 H15.1 Q16.9 2.9 16.9 4.7 V7.2 Q16.9 8.9 15.1 8.9 H13.7"/><path d="M4.15 8.75 Q1.15 8.75 1.15 11.2 V13.2 Q1.15 15.1 3.2 15.1 H10.1"/></g></svg>
<svg class="abs" style="left:1127.40px;top:286.50px;overflow:visible" width="23.22" height="23.22" viewBox="0 0 23.22 23.22"><g transform="scale(1.29)" fill="none" stroke="#e4e4e4" stroke-width="1.24031" stroke-linecap="round" stroke-linejoin="round"><rect x="0.85" y="0.8" width="4.1" height="4.0" rx="0.6"/><rect x="7.0" y="6.95" width="3.8" height="3.85" rx="0.6"/><rect x="13.1" y="12.95" width="4.0" height="3.95" rx="0.6"/><path d="M7.6 2.9 H15.1 Q16.9 2.9 16.9 4.7 V7.2 Q16.9 8.9 15.1 8.9 H13.7"/><path d="M4.15 8.75 Q1.15 8.75 1.15 11.2 V13.2 Q1.15 15.1 3.2 15.1 H10.1"/></g></svg>
<svg class="abs" style="left:0;top:0" width="1920" height="1200"><path d="M1410.6 287 H1403.3 Q1400.1 287 1400.1 290.2 V306 Q1400.1 309.1 1403.3 309.1 H1413.9 Q1417.1 309.1 1417.1 306 V293.3 Z" fill="none" stroke="#fff" stroke-width="1.9" stroke-linejoin="round"/><path d="M1410.6 287 V292.4 Q1410.6 293.3 1411.5 293.3 H1417.1" fill="none" stroke="#fff" stroke-width="1.9" stroke-linejoin="round"/><path d="M1403.8 294.6 H1406.6 M1403.8 299.2 H1413.6 M1403.8 303.6 H1413.6" stroke="#fff" stroke-width="1.9" stroke-linecap="round"/></svg>
<svg class="abs" style="left:659.20px;top:439.50px;overflow:visible" width="14" height="12" viewBox="0 0 14 12"><path d="M1 6 H12.2 M7 1.1 L12.4 6 L7 10.9" fill="none" stroke="#6b6df4" stroke-width="1.9" stroke-linecap="round" stroke-linejoin="round"/></svg>
<svg class="abs" style="left:947.50px;top:439.50px;overflow:visible" width="14" height="12" viewBox="0 0 14 12"><path d="M1 6 H12.2 M7 1.1 L12.4 6 L7 10.9" fill="none" stroke="#6b6df4" stroke-width="1.9" stroke-linecap="round" stroke-linejoin="round"/></svg>
<svg class="abs" style="left:1217.90px;top:439.50px;overflow:visible" width="14" height="12" viewBox="0 0 14 12"><path d="M1 6 H12.2 M7 1.1 L12.4 6 L7 10.9" fill="none" stroke="#6b6df4" stroke-width="1.9" stroke-linecap="round" stroke-linejoin="round"/></svg>
<svg class="abs" style="left:1549.00px;top:439.50px;overflow:visible" width="14" height="12" viewBox="0 0 14 12"><path d="M1 6 H12.2 M7 1.1 L12.4 6 L7 10.9" fill="none" stroke="#6b6df4" stroke-width="1.9" stroke-linecap="round" stroke-linejoin="round"/></svg>
<svg class="abs" style="left:578.40px;top:527.50px;overflow:visible" width="21.008" height="14.768" viewBox="0 0 21.008 14.768"><g transform="scale(1.04)" fill="none" stroke="#ffffff" stroke-width="1.53846" stroke-linejoin="miter"><rect x="9.2" y="0.8" width="10.2" height="12.6"/><path d="M7.1 2.1 H5.1 V12.1 H7.1"/><path d="M3.0 3.8 H0.8 V10.4 H3.0"/></g></svg>
<svg class="abs" style="left:576.60px;top:806.50px;overflow:visible" width="18" height="18" viewBox="0 0 18 18"><g transform="scale(1)" fill="none" stroke="#ffffff" stroke-width="1.4" stroke-linecap="round" stroke-linejoin="round"><rect x="0.85" y="0.8" width="4.1" height="4.0" rx="0.6"/><rect x="7.0" y="6.95" width="3.8" height="3.85" rx="0.6"/><rect x="13.1" y="12.95" width="4.0" height="3.95" rx="0.6"/><path d="M7.6 2.9 H15.1 Q16.9 2.9 16.9 4.7 V7.2 Q16.9 8.9 15.1 8.9 H13.7"/><path d="M4.15 8.75 Q1.15 8.75 1.15 11.2 V13.2 Q1.15 15.1 3.2 15.1 H10.1"/></g></svg>
<svg class="abs" style="left:1108.75px;top:806.60px;overflow:visible" width="17.64" height="17.64" viewBox="0 0 17.64 17.64"><g transform="scale(0.98)" fill="none" stroke="#ffffff" stroke-width="1.42857" stroke-linecap="round" stroke-linejoin="round"><rect x="0.85" y="0.8" width="4.1" height="4.0" rx="0.6"/><rect x="7.0" y="6.95" width="3.8" height="3.85" rx="0.6"/><rect x="13.1" y="12.95" width="4.0" height="3.95" rx="0.6"/><path d="M7.6 2.9 H15.1 Q16.9 2.9 16.9 4.7 V7.2 Q16.9 8.9 15.1 8.9 H13.7"/><path d="M4.15 8.75 Q1.15 8.75 1.15 11.2 V13.2 Q1.15 15.1 3.2 15.1 H10.1"/></g></svg>
<svg class="abs" style="left:1108.75px;top:985.00px;overflow:visible" width="17.46" height="17.46" viewBox="0 0 17.46 17.46"><g transform="scale(0.97)" fill="none" stroke="#ffffff" stroke-width="1.4433" stroke-linecap="round" stroke-linejoin="round"><rect x="0.85" y="0.8" width="4.1" height="4.0" rx="0.6"/><rect x="7.0" y="6.95" width="3.8" height="3.85" rx="0.6"/><rect x="13.1" y="12.95" width="4.0" height="3.95" rx="0.6"/><path d="M7.6 2.9 H15.1 Q16.9 2.9 16.9 4.7 V7.2 Q16.9 8.9 15.1 8.9 H13.7"/><path d="M4.15 8.75 Q1.15 8.75 1.15 11.2 V13.2 Q1.15 15.1 3.2 15.1 H10.1"/></g></svg>
<svg class="abs" style="left:0;top:0" width="1920" height="1200"><path d="M1027.8 814 L1031.5 810.4 L1035.2 814 M1027.8 817 L1031.5 820.6 L1035.2 817" fill="none" stroke="#e6e6e6" stroke-width="1.25" stroke-linecap="round" stroke-linejoin="round"/></svg>
<svg class="abs" style="left:0;top:0" width="1920" height="1200"><path d="M1186.5 851.9 V857.8 M1183.4 854.8 L1186.5 851.7 L1189.6 854.8" fill="none" stroke="#bdbdbd" stroke-width="1.2" stroke-linecap="round" stroke-linejoin="round"/><path d="M1192.4 1029.2 V1035.2 M1189.3 1032.2 L1192.4 1035.3 L1195.5 1032.2" fill="none" stroke="#bdbdbd" stroke-width="1.2" stroke-linecap="round" stroke-linejoin="round"/></svg>
<svg class="abs" style="left:0;top:0" width="1920" height="1200"><circle cx="585.2" cy="865.1" r="6.4" fill="none" stroke="#85898e" stroke-width="1.2"/><path d="M585.2 861.9 V868.3 M582 865.1 H588.4" stroke="#85898e" stroke-width="1.2" stroke-linecap="round"/><path d="M591.8 943.4 Q586.8 943.6 583.9 947.8 L587.2 951.1 Q591.5 948.2 591.8 943.4 Z" fill="none" stroke="#85898e" stroke-width="1.1" stroke-linejoin="round"/><path d="M584.4 947.4 Q581.2 946.8 580.1 949.8 L583 949.9 M587.6 950.6 Q588.2 953.8 585.2 954.9 L585.1 952" fill="none" stroke="#85898e" stroke-width="1.1" stroke-linejoin="round"/><ellipse cx="580.9" cy="954.1" rx="1.6" ry="2.0" transform="rotate(35 580.9 954.1)" fill="none" stroke="#85898e" stroke-width="1.1"/><circle cx="585.3" cy="1029.0" r="6.5" fill="none" stroke="#85898e" stroke-width="1.2"/><path d="M581.6 1031.5 A4.2 4.2 0 0 1 586.5 1024.9 M589.2 1027.5 A4.2 4.2 0 0 1 588.6 1031.6" fill="none" stroke="#85898e" stroke-width="1.1" stroke-linecap="round"/><path d="M585.3 1029 L588 1026.2" stroke="#85898e" stroke-width="1.2" stroke-linecap="round"/><circle cx="585.3" cy="1029" r="1" fill="#85898e"/><path d="M585.4 1098.9 L591.2 1102.2 V1108.8 L585.4 1112.1 L579.6 1108.8 V1102.2 Z" fill="none" stroke="#85898e" stroke-width="1.2" stroke-linejoin="round"/><path d="M585.4 1104.6 V1108.6" stroke="#85898e" stroke-width="1.2"/><circle cx="585.4" cy="1102.6" r="0.7" fill="#85898e"/></svg>
<svg class="abs" style="left:0;top:0" width="1920" height="1200"><path d="M469.5 1105.2 H466.4 Q465.3 1105.2 465.3 1106.3 V1112.4 Q465.3 1113.5 466.4 1113.5 H472.5 Q473.6 1113.5 473.6 1112.4 V1109.3" fill="none" stroke="#e6e6e6" stroke-width="1.3" stroke-linecap="round"/><path d="M468.8 1110 L474.2 1104.6 M471 1104.6 H474.2 V1107.8" fill="none" stroke="#e6e6e6" stroke-width="1.3" stroke-linecap="round" stroke-linejoin="round"/><circle cx="353.4" cy="1146.4" r="3.6" fill="none" stroke="#c8c8c8" stroke-width="1.2"/><path d="M356.1 1149.1 L358.7 1151.7" stroke="#c8c8c8" stroke-width="1.2" stroke-linecap="round"/></svg>
<div class="tx" id="nv1" style="left:341.00px;top:192.97px;font-size:11.50px;font-weight:bold;color:#ececec;font-family:'Liberation Sans',sans-serif;transform:scaleX(0.8927)">Pipeline Dashboard</div>
<div class="tx" id="nv2" style="left:341.00px;top:220.47px;font-size:11.50px;font-weight:bold;color:#ececec;font-family:'Liberation Sans',sans-serif;transform:scaleX(0.8673)">Usage Dashboard</div>
<div class="tx" id="nv3" style="left:341.00px;top:247.97px;font-size:11.50px;font-weight:bold;color:#ececec;font-family:'Liberation Sans',sans-serif;transform:scaleX(0.8732)">Favorites</div>
<div class="tx" id="nv4" style="left:341.00px;top:275.97px;font-size:11.50px;font-weight:bold;color:#ececec;font-family:'Liberation Sans',sans-serif;transform:scaleX(0.9099)">Documentation</div>
<div class="tx" id="rl1" style="left:285.20px;top:301.18px;font-size:9.80px;font-weight:bold;color:#d0d0d0;font-family:'Liberation Sans',sans-serif;transform:scaleX(0.8576)">Home</div>
<div class="tx" id="rl2" style="left:277.80px;top:368.70px;font-size:9.80px;font-weight:bold;color:#d0d0d0;font-family:'Liberation Sans',sans-serif;transform:scaleX(0.8590)">Pipelines</div>
<div class="tx" id="rl3" style="left:285.00px;top:424.70px;font-size:9.80px;font-weight:bold;color:#d0d0d0;font-family:'Liberation Sans',sans-serif;transform:scaleX(0.7857)">Views</div>
<div class="tx" id="rl4" style="left:282.00px;top:487.70px;font-size:9.80px;font-weight:bold;color:#d0d0d0;font-family:'Liberation Sans',sans-serif;transform:scaleX(0.8529)">Boards</div>
<div class="tx" id="rl5" style="left:280.20px;top:549.46px;font-size:9.80px;font-weight:bold;color:#d0d0d0;font-family:'Liberation Sans',sans-serif;transform:scaleX(0.8422)">Screens</div>
<div class="tx" id="rl6" style="left:284.20px;top:609.70px;font-size:9.80px;font-weight:bold;color:#d0d0d0;font-family:'Liberation Sans',sans-serif;transform:scaleX(0.8485)">Usage</div>
<div class="tx" id="rl7" style="left:281.80px;top:673.42px;font-size:9.80px;font-weight:bold;color:#d0d0d0;font-family:'Liberation Sans',sans-serif;transform:scaleX(0.8293)">Restore</div>
<div class="tx" id="rl8" style="left:280.20px;top:735.20px;font-size:9.80px;font-weight:bold;color:#d0d0d0;font-family:'Liberation Sans',sans-serif;transform:scaleX(0.8315)">Settings</div>
<div class="tx" id="home" style="left:576.00px;top:198.52px;font-size:18.00px;font-weight:bold;color:#f5f5f5;font-family:'Liberation Sans',sans-serif;transform:scaleX(0.9626)">Home</div>
<div class="tx" id="l7" style="left:1445.80px;top:203.12px;font-size:13.40px;font-weight:normal;color:#e0e0e0;font-family:'Liberation Sans',sans-serif;transform:scaleX(0.8991)">Last 7 days</div>
<div class="tx" id="ct1" style="left:577.00px;top:340.44px;font-size:16.00px;font-weight:bold;color:#f2f2f2;font-family:'Liberation Sans',sans-serif;transform:scaleX(0.9113)">Log Analysis</div>
<div class="tx" id="ct2" style="left:846.20px;top:340.44px;font-size:16.00px;font-weight:bold;color:#f2f2f2;font-family:'Liberation Sans',sans-serif;transform:scaleX(0.9160)">Pipelines</div>
<div class="tx" id="ct3" style="left:1116.80px;top:339.44px;font-size:16.00px;font-weight:bold;color:#f2f2f2;font-family:'Liberation Sans',sans-serif;transform:scaleX(0.9244)">Optimize Data</div>
<div class="tx" id="ct4" style="left:1385.00px;top:340.44px;font-size:16.00px;font-weight:bold;color:#f2f2f2;font-family:'Liberation Sans',sans-serif;transform:scaleX(0.9372)">Documentation</div>
<div class="tx" id="cd1a" style="left:577.00px;top:379.74px;font-size:13.30px;font-weight:normal;color:#a0a0a0;font-family:'Liberation Sans',sans-serif;transform:scaleX(1.0423)">Explore and act on log data</div>
<div class="tx" id="cd1b" style="left:578.00px;top:402.74px;font-size:13.30px;font-weight:normal;color:#a0a0a0;font-family:'Liberation Sans',sans-serif;transform:scaleX(1.0423)">quickly and easily</div>
<div class="tx" id="cd2a" style="left:846.20px;top:379.74px;font-size:13.30px;font-weight:normal;color:#a0a0a0;font-family:'Liberation Sans',sans-serif;transform:scaleX(0.9355)">Reduce costs, respond to incidents</div>
<div class="tx" id="cd2b" style="left:847.20px;top:402.74px;font-size:13.30px;font-weight:normal;color:#a0a0a0;font-family:'Liberation Sans',sans-serif;transform:scaleX(0.9355)">and simplify compliance</div>
<div class="tx" id="cd3a" style="left:1115.80px;top:379.74px;font-size:13.30px;font-weight:normal;color:#a0a0a0;font-family:'Liberation Sans',sans-serif;transform:scaleX(1.0453)">Build a pipeline to reduce log</div>
<div class="tx" id="cd3b" style="left:1116.80px;top:402.74px;font-size:13.30px;font-weight:normal;color:#a0a0a0;font-family:'Liberation Sans',sans-serif;transform:scaleX(1.0453)">volume with our workflow</div>
<div class="tx" id="cd4a" style="left:1386.00px;top:379.74px;font-size:13.30px;font-weight:normal;color:#a0a0a0;font-family:'Liberation Sans',sans-serif;transform:scaleX(0.9394)">Get up to speed on how to unlock</div>
<div class="tx" id="cd4b" style="left:1386.00px;top:402.74px;font-size:13.30px;font-weight:normal;color:#a0a0a0;font-family:'Liberation Sans',sans-serif;transform:scaleX(0.9394)">all of Mezmo’s capabilities</div>
<div class="tx" id="cl1" style="left:578.00px;top:439.05px;font-size:13.20px;font-weight:normal;color:#6b6df4;font-family:'Liberation Sans',sans-serif;transform:scaleX(1.0423)">Go to Views</div>
<div class="tx" id="cl2" style="left:847.20px;top:439.05px;font-size:13.20px;font-weight:normal;color:#6b6df4;font-family:'Liberation Sans',sans-serif;transform:scaleX(1.0425)">Go to Pipelines</div>
<div class="tx" id="cl3" style="left:1115.80px;top:439.05px;font-size:13.20px;font-weight:normal;color:#6b6df4;font-family:'Liberation Sans',sans-serif;transform:scaleX(1.0457)">Build a Pipeline</div>
<div class="tx" id="cl4" style="left:1386.00px;top:439.05px;font-size:13.20px;font-weight:normal;color:#6b6df4;font-family:'Liberation Sans',sans-serif;transform:scaleX(1.0606)">Open our Documentation</div>
<div class="tx" id="lh" style="left:609.80px;top:527.97px;font-size:14.50px;font-weight:bold;color:#f0f0f0;font-family:'Liberation Sans',sans-serif;transform:scaleX(0.9277)">Log Histogram</div>
<div class="tx" id="lhd" style="left:716.20px;top:532.45px;font-size:11.50px;font-weight:normal;color:#dcdcdc;font-family:'Liberation Sans',sans-serif;transform:scaleX(0.9056)">6/24/25 8:45:00 - 6/24/25 9:45:00</div>
<div class="tx" id="gtv" style="left:1508.20px;top:528.74px;font-size:13.00px;font-weight:normal;color:#e6e6e6;font-family:'Liberation Sans',sans-serif;transform:scaleX(0.9187)">Go to Views</div>
<div class="tx" id="xl1" style="left:577.80px;top:714.60px;font-size:12.00px;font-weight:normal;color:#8a8a8a;font-family:'Liberation Sans',sans-serif;transform:scaleX(0.8545)">XX:XX:XX</div>
<div class="tx" id="xl2" style="left:738.20px;top:714.60px;font-size:12.00px;font-weight:normal;color:#8a8a8a;font-family:'Liberation Sans',sans-serif;transform:scaleX(0.8522)">XX:XX:XX</div>
<div class="tx" id="xl3" style="left:897.60px;top:714.60px;font-size:12.00px;font-weight:normal;color:#8a8a8a;font-family:'Liberation Sans',sans-serif;transform:scaleX(0.8522)">XX:XX:XX</div>
<div class="tx" id="xl4" style="left:1057.00px;top:714.60px;font-size:12.00px;font-weight:normal;color:#8a8a8a;font-family:'Liberation Sans',sans-serif;transform:scaleX(0.8545)">XX:XX:XX</div>
<div class="tx" id="xl5" style="left:1216.40px;top:714.60px;font-size:12.00px;font-weight:normal;color:#8a8a8a;font-family:'Liberation Sans',sans-serif;transform:scaleX(0.8522)">XX:XX:XX</div>
<div class="tx" id="xl6" style="left:1375.80px;top:714.60px;font-size:12.00px;font-weight:normal;color:#8a8a8a;font-family:'Liberation Sans',sans-serif;transform:scaleX(0.8545)">XX:XX:XX</div>
<div class="tx" id="xl7" style="left:1536.60px;top:714.60px;font-size:12.00px;font-weight:normal;color:#8a8a8a;font-family:'Liberation Sans',sans-serif;transform:scaleX(0.8635)">XX:XX:XX</div>
<div class="tx" id="rpa" style="left:601.20px;top:808.96px;font-size:14.20px;font-weight:bold;color:#f0f0f0;font-family:'Liberation Sans',sans-serif;transform:scaleX(0.9628)">Recent Pipeline Activity</div>
<div class="tx" id="err" style="left:834.60px;top:809.95px;font-size:12.70px;font-weight:normal;color:#e8e8e8;font-family:'Liberation Sans',sans-serif;transform:scaleX(0.9748)">Errors</div>
<div class="tx" id="aud" style="left:895.40px;top:809.95px;font-size:12.70px;font-weight:normal;color:#9a9a9a;font-family:'Liberation Sans',sans-serif;transform:scaleX(0.9669)">Audit Logs</div>
<div class="tx" id="exp" style="left:980.40px;top:809.95px;font-size:12.70px;font-weight:normal;color:#ececec;font-family:'Liberation Sans',sans-serif;transform:scaleX(0.9652)">Expand</div>
<div class="tx" id="at1" style="left:600.60px;top:859.51px;font-size:10.90px;font-weight:bold;color:#f2f2f2;font-family:'Liberation Sans',sans-serif;transform:scaleX(0.9460)">New source added</div>
<div class="tx" id="ad1" style="left:600.60px;top:876.87px;font-size:10.50px;font-weight:normal;color:#d4d4d4;font-family:'Liberation Sans',sans-serif;transform:scaleX(1.0153)">Cloudflare-Edge' was successsfully connected and is now ingesting data.</div>
<div class="tx" id="am1" style="left:600.60px;top:898.02px;font-size:7.70px;font-weight:normal;color:#9a9a9a;font-family:'Liberation Mono',monospace;transform:scaleX(0.9770)">43s ago</div>
<div class="tx" id="at2" style="left:600.60px;top:944.49px;font-size:10.90px;font-weight:bold;color:#f2f2f2;font-family:'Liberation Sans',sans-serif;transform:scaleX(0.9773)">Pipeline deployed</div>
<div class="tx" id="ad2" style="left:600.60px;top:961.87px;font-size:10.50px;font-weight:normal;color:#d4d4d4;font-family:'Liberation Sans',sans-serif;transform:scaleX(1.0153)">Changes to pipeline-prod-us' were deployed at 2:14 PM by j.doe</div>
<div class="tx" id="am2" style="left:600.60px;top:982.30px;font-size:7.70px;font-weight:normal;color:#9a9a9a;font-family:'Liberation Mono',monospace;transform:scaleX(0.9878)">4m ago</div>
<div class="tx" id="at3" style="left:600.60px;top:1025.73px;font-size:10.90px;font-weight:bold;color:#f2f2f2;font-family:'Liberation Sans',sans-serif;transform:scaleX(0.9952)">Throttling detected</div>
<div class="tx" id="ad3" style="left:600.60px;top:1042.13px;font-size:10.50px;font-weight:normal;color:#d4d4d4;font-family:'Liberation Sans',sans-serif;transform:scaleX(1.0153)">Splunk is rate-limiting events from pipeline-prod-us.</div>
<div class="tx" id="am3" style="left:600.60px;top:1063.30px;font-size:7.70px;font-weight:normal;color:#9a9a9a;font-family:'Liberation Mono',monospace;transform:scaleX(0.9770)">43m ago</div>
<div class="tx" id="tiv" style="left:1137.00px;top:808.95px;font-size:14.50px;font-weight:bold;color:#c8c8c8;font-family:'Liberation Sans',sans-serif;transform:scaleX(0.9359)">Total Ingress Volume</div>
<div class="tx" id="tb" style="left:1109.60px;top:839.72px;font-size:21.00px;font-weight:bold;color:#f0f0f0;font-family:'Liberation Sans',sans-serif;transform:scaleX(0.9526)">1.2 TB</div>
<div class="tx" id="tbd" style="left:1193.50px;top:847.93px;font-size:12.70px;font-weight:normal;color:#c4c4c4;font-family:'Liberation Sans',sans-serif;transform:scaleX(0.9417)">3.1% last 30 days</div>
<div class="tx" id="tev" style="left:1138.20px;top:986.97px;font-size:14.50px;font-weight:bold;color:#c8c8c8;font-family:'Liberation Sans',sans-serif;transform:scaleX(0.9234)">Total Egress Volume</div>
<div class="tx" id="mb" style="left:1109.60px;top:1017.50px;font-size:21.00px;font-weight:bold;color:#f0f0f0;font-family:'Liberation Sans',sans-serif;transform:scaleX(0.9457)">175 MB</div>
<div class="tx" id="mbd" style="left:1199.00px;top:1025.93px;font-size:12.70px;font-weight:normal;color:#c4c4c4;font-family:'Liberation Sans',sans-serif;transform:scaleX(0.9436)">0.15% last 30 days</div>
<div class="tx" id="dsp" style="left:576.40px;top:1141.87px;font-size:15.20px;font-weight:normal;color:#b2b2b2;font-family:'Liberation Sans',sans-serif;transform:scaleX(0.9431)">Don’t show this page on start up</div>
<div class="tx" id="docb" style="left:366.40px;top:1103.02px;font-size:12.50px;font-weight:normal;color:#ececec;font-family:'Liberation Sans',sans-serif;transform:scaleX(1.0457)">Documentation</div>
<div class="tx" id="srch" style="left:364.00px;top:1142.17px;font-size:11.00px;font-weight:normal;color:#cccccc;font-family:'Liberation Sans',sans-serif;transform:scaleX(0.9462)">Search</div>
<div class="abs" style="left:554px;top:1095px;width:517px;height:16px;overflow:hidden"><div class="tx" style="left:47px;top:7px;font-size:10.9px;font-weight:bold;color:#f2f2f2;transform:scaleX(0.96)">Usage threshold hit</div></div>

</body></html>
